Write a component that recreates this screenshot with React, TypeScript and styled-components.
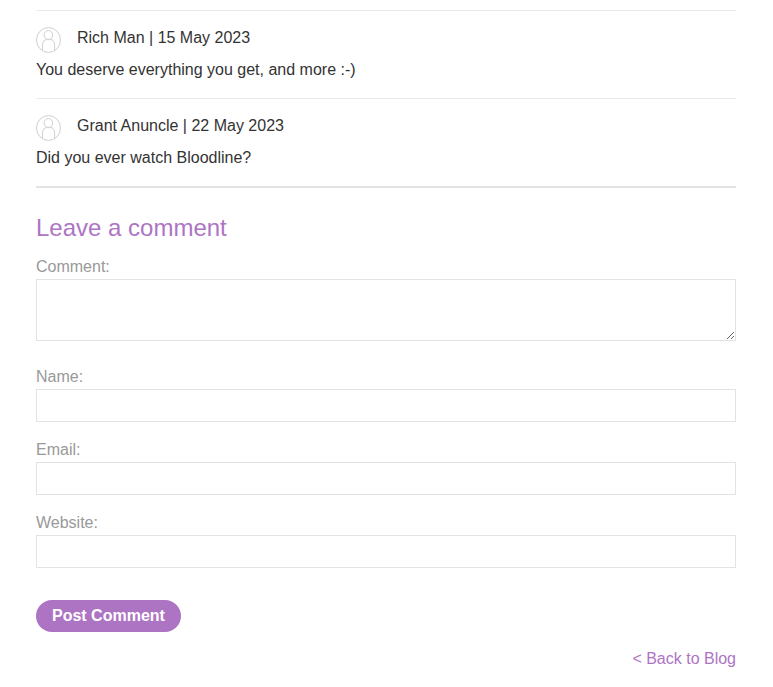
import React from "react";
import styled, { createGlobalStyle } from "styled-components";

const GlobalStyle = createGlobalStyle`
  *, *::before, *::after { box-sizing: border-box; }
  body {
    margin: 0;
    background: #fff;
    color: #333;
    font: 16px/24px "Liberation Sans", Arial, sans-serif;
  }
`;

const Page = styled.main`
  padding: 10px 37px 16px 36px;
`;

const CommentList = styled.ul`
  margin: 0;
  padding: 0;
  list-style: none;
  border-bottom: 2px solid #e3e3e3;
`;

const CommentItem = styled.li`
  padding: 15px 0 16px;
  border-top: 1px solid #e8ebeb;
`;

const CommentHeader = styled.div`
  display: flex;
  align-items: flex-start;
  gap: 16px;
  height: 32px;
`;

const AvatarIcon = styled.svg`
  flex: none;
  width: 25px;
  height: 28px;
  fill: none;
  stroke: #cdd1d1;
`;

const CommentText = styled.p`
  margin: 0;
`;

const Title = styled.h2`
  margin: 24px 0 11px;
  color: #ae74c4;
  font-size: 24px;
  font-weight: 400;
  line-height: 32px;
`;

const Form = styled.form`
  display: flex;
  flex-direction: column;
  gap: 16px;
`;

const Field = styled.div<{ $multiline?: boolean }>`
  display: flex;
  flex-direction: column;
  padding-bottom: ${(p) => (p.$multiline ? "8px" : "0")};
`;

const Label = styled.label`
  color: #999;
`;

const Input = styled.input`
  width: 100%;
  height: 33px;
  padding: 4px 8px;
  border: 1px solid #e3e3e3;
  border-radius: 0;
  background: #fff;
  color: inherit;
  font: inherit;
`;

const TextArea = styled.textarea`
  width: 100%;
  height: 62px;
  padding: 4px 8px;
  border: 1px solid #e3e3e3;
  border-radius: 0;
  background: #fff;
  color: inherit;
  font: inherit;
  resize: both;
`;

const SubmitButton = styled.button`
  align-self: flex-start;
  margin-top: 16px;
  padding: 4px 16px;
  border: 0;
  border-radius: 16px;
  background: #ae74c4;
  color: #fff;
  font: inherit;
  font-weight: 700;
  cursor: pointer;
`;

const Footer = styled.footer`
  display: flex;
  justify-content: flex-end;
  margin-top: 15px;
`;

const BackLink = styled.a`
  color: #ae74c4;
  text-decoration: none;
`;

const comments = [
  { author: "Rich Man", date: "15 May 2023", text: "You deserve everything you get, and more :-)" },
  { author: "Grant Anuncle", date: "22 May 2023", text: "Did you ever watch Bloodline?" },
];

const fields = [
  { id: "name", label: "Name:", type: "text" },
  { id: "email", label: "Email:", type: "email" },
  { id: "website", label: "Website:", type: "url" },
];

function Avatar() {
  return (
    <AvatarIcon viewBox="0 0 25 28" aria-hidden="true">
      <ellipse cx="12.5" cy="14" rx="12" ry="12.4" />
      <ellipse cx="12.4" cy="9" rx="4.3" ry="4.5" />
      <path d="M6.5 24.8V19C6.5 15.6 8.6 13.6 10.6 13.6H14.6C16.8 13.6 18.7 15.6 18.7 19V24.8" />
    </AvatarIcon>
  );
}

export default function App() {
  return (
    <>
      <GlobalStyle />
      <Page>
        <CommentList>
          {comments.map((c) => (
            <CommentItem key={c.author}>
              <CommentHeader>
                <Avatar />
                <span>{`${c.author} | ${c.date}`}</span>
              </CommentHeader>
              <CommentText>{c.text}</CommentText>
            </CommentItem>
          ))}
        </CommentList>
        <Title>Leave a comment</Title>
        <Form onSubmit={(e) => e.preventDefault()}>
          <Field $multiline>
            <Label htmlFor="comment">Comment:</Label>
            <TextArea id="comment" name="comment" />
          </Field>
          {fields.map((f) => (
            <Field key={f.id}>
              <Label htmlFor={f.id}>{f.label}</Label>
              <Input id={f.id} name={f.id} type={f.type} />
            </Field>
          ))}
          <SubmitButton type="submit">Post Comment</SubmitButton>
        </Form>
        <Footer>
          <BackLink href="#blog">&lt; Back to Blog</BackLink>
        </Footer>
      </Page>
    </>
  );
}
